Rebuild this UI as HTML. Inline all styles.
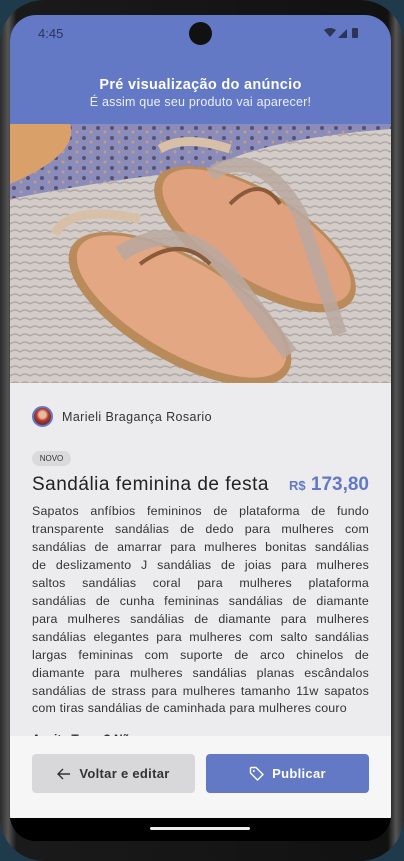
<!DOCTYPE html>
<html><head><meta charset="utf-8"><style>
*{margin:0;padding:0;box-sizing:border-box}
body{width:404px;height:861px;overflow:hidden;background:#1f3a4a;font-family:"Liberation Sans",sans-serif;position:relative}
.frame{position:absolute;left:0;top:0;width:404px;height:861px;border-radius:44px;background:linear-gradient(90deg,#2a2a2a,#555 2%,#1a1a1a 4%,#111 96%,#555 98%,#2a2a2a);}
.screen{position:absolute;left:10px;top:15px;width:381px;height:826px;border-radius:26px;overflow:hidden;background:#000}
.hdr{position:absolute;left:0;top:0;width:381px;height:109px;background:#6379c6;color:#fff;text-align:center}
.time{position:absolute;left:28px;top:11px;font-size:13px;color:#2c3558}
.cam{position:absolute;left:179px;top:7px;width:23px;height:23px;border-radius:50%;background:#111}
.t1{position:absolute;top:62px;width:100%;font-weight:bold;font-size:14.5px;letter-spacing:.3px}
.t2{position:absolute;top:80px;width:100%;font-size:12.5px;letter-spacing:.2px;color:#eef}
.img{position:absolute;left:0;top:109px;width:381px;height:259px}
.body{position:absolute;left:0;top:368px;width:381px;height:360px;background:#ececee;overflow:hidden}
.av{position:absolute;left:22px;top:23px;width:21px;height:21px;border-radius:50%;background:radial-gradient(circle at 50% 40%,#e9b9a0 25%,#b63a2a 45%,#7a2a30 70%);border:2px solid #6379c6}
.name{position:absolute;left:52px;top:27px;font-size:12.5px;color:#333;letter-spacing:.4px}
.chip{position:absolute;left:22px;top:68px;width:39px;height:15px;border-radius:8px;background:#dadadc;font-size:8px;color:#333;text-align:center;line-height:15px}
.title{position:absolute;left:22px;top:91px;font-size:19px;color:#222;letter-spacing:.5px;font-weight:500}
.price{position:absolute;right:22px;top:91px;font-size:19px;color:#6379c6;font-weight:bold}
.price small{font-size:13px}
.desc{position:absolute;left:22px;top:120px;width:337px;font-size:12.4px;line-height:17.95px;color:#333;letter-spacing:.2px}
.desc div{text-align:justify;text-align-last:justify;white-space:nowrap}
.desc div.l{text-align-last:left}
.ask{position:absolute;left:22px;top:349px;font-size:12px;color:#333;font-weight:bold}
.foot{position:absolute;left:0;top:721px;width:381px;height:82px;background:#f6f6f6}
.btn{position:absolute;top:18px;width:163px;height:39px;border-radius:4px;font-weight:bold;font-size:13px;display:flex;align-items:center;justify-content:center;gap:8px;letter-spacing:.3px}
.b1{left:22px;background:#d8d8da;color:#333}
.b2{left:196px;background:#6379c6;color:#fff}
.nav{position:absolute;left:0;top:803px;width:381px;height:23px;background:#000}
.pill{position:absolute;left:140px;top:9px;width:100px;height:3px;border-radius:2px;background:#eee}
</style></head><body>
<div class="frame"></div>
<div class="screen">
 <div class="hdr">
  <div class="time">4:45</div>
  <div class="cam"></div>
  <svg style="position:absolute;left:314px;top:12px" width="40" height="12" viewBox="0 0 40 12">
   <path d="M0 3 Q6 -1 12 3 L6 10Z" fill="#2c3558"/>
   <path d="M14 11 L23 2 L23 11Z" fill="#2c3558"/>
   <rect x="28" y="1" width="6" height="10" rx="1" fill="#2c3558"/>
  </svg>
  <div class="t1">Pré visualização do anúncio</div>
  <div class="t2">É assim que seu produto vai aparecer!</div>
 </div>
 <svg class="img" viewBox="0 0 381 259" preserveAspectRatio="none">
  <defs>
   <pattern id="rug" width="10" height="8" patternUnits="userSpaceOnUse">
    <rect width="10" height="8" fill="#d3ccc8"/>
    <path d="M0 4 Q5 0 10 4" stroke="#b0a8a4" stroke-width="1.5" fill="none"/>
   </pattern>
   <pattern id="blu" width="14" height="10" patternUnits="userSpaceOnUse">
    <rect width="14" height="10" fill="#8a8cbc"/>
    <circle cx="4" cy="4" r="2" fill="#5a4f6e"/><circle cx="11" cy="8" r="1.5" fill="#c89a80"/>
   </pattern>
  </defs>
  <rect width="381" height="259" fill="url(#rug)"/>
  <path d="M0 0 H381 V5 Q250 15 200 45 Q100 55 0 75Z" fill="url(#blu)"/>
  <path d="M0 0 H60 Q70 30 0 60Z" fill="#d9a06a"/>
  <g transform="rotate(32 245 115)">
   <ellipse cx="245" cy="115" rx="115" ry="48" fill="#b98a5a"/>
   <ellipse cx="245" cy="112" rx="108" ry="42" fill="#e0a27e"/>
  </g>
  <path d="M150 25 Q175 10 220 25" stroke="#d8c0a8" stroke-width="9" fill="none"/>
  <path d="M200 50 Q250 20 290 90 Q310 150 330 210" stroke="#b8a8a0" stroke-width="14" fill="none" opacity=".85"/>
  <g transform="rotate(30 170 185)">
   <ellipse cx="170" cy="185" rx="125" ry="52" fill="#b98a5a"/>
   <ellipse cx="170" cy="182" rx="118" ry="46" fill="#e3a883"/>
  </g>
  <path d="M45 110 Q60 80 130 95" stroke="#d8c0a8" stroke-width="9" fill="none"/>
  <path d="M110 130 Q170 90 220 150 Q250 190 280 230" stroke="#b8a8a0" stroke-width="16" fill="none" opacity=".85"/>
  <path d="M130 140 Q170 110 200 140" stroke="#8a5a3a" stroke-width="4" fill="none"/>
  <path d="M220 80 Q250 50 270 80" stroke="#8a5a3a" stroke-width="4" fill="none"/>
 </svg>
 <div class="body">
  <div class="av"></div>
  <div class="name">Marieli Bragança Rosario</div>
  <div class="chip">NOVO</div>
  <div class="title">Sandália feminina de festa</div>
  <div class="price"><small>R$</small> 173,80</div>
  <div class="desc">
<div>Sapatos anfíbios femininos de plataforma de fundo</div>
<div>transparente sandálias de dedo para mulheres com</div>
<div>sandálias de amarrar para mulheres bonitas sandálias</div>
<div>de deslizamento J sandálias de joias para mulheres</div>
<div>saltos sandálias coral para mulheres plataforma</div>
<div>sandálias de cunha femininas sandálias de diamante</div>
<div>para mulheres sandálias de diamante para mulheres</div>
<div>sandálias elegantes para mulheres com salto sandálias</div>
<div>largas femininas com suporte de arco chinelos de</div>
<div>diamante para mulheres sandálias planas escândalos</div>
<div>sandálias de strass para mulheres tamanho 11w sapatos</div>
<div class="l">com tiras sandálias de caminhada para mulheres couro</div>
  </div>
  <div class="ask">Aceita Troca? Não</div>
 </div>
 <div class="foot">
  <div class="btn b1"><svg width="14" height="12" viewBox="0 0 14 12"><path d="M13 6H1M6 1L1 6L6 11" stroke="#333" stroke-width="1.4" fill="none"/></svg>Voltar e editar</div>
  <div class="btn b2"><svg width="15" height="15" viewBox="0 0 15 15"><path d="M1.5 2v5l7 7 5.5-5.5-7-7H2Z" stroke="#fff" stroke-width="1.4" fill="none" stroke-linejoin="round"/><circle cx="4.8" cy="5" r="1" fill="#fff"/></svg>Publicar</div>
 </div>
 <div class="nav"><div class="pill"></div></div>
</div>
</body></html>
